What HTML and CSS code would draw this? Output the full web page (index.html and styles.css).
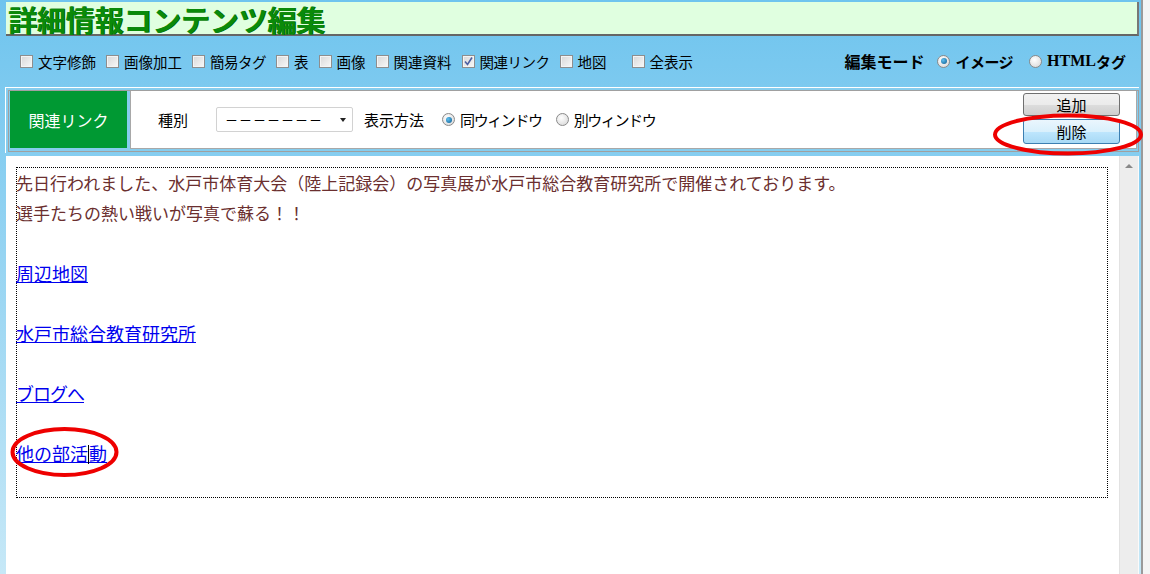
FILE: index.html
```html
<!DOCTYPE html>
<html lang="ja">
<head>
    <meta charset="UTF-8">
    <title>詳細情報コンテンツ編集</title>
    <link rel="stylesheet" href="styles.css">
</head>
<body>
    <div class="frame">
        <h1 class="title">詳細情報コンテンツ編集</h1>

        <div class="toolbar">
            <label class="chk"><span class="box"></span>文字修飾</label>
            <label class="chk"><span class="box"></span>画像加工</label>
            <label class="chk"><span class="box"></span><span class="kana">簡易タグ</span></label>
            <label class="chk"><span class="box"></span>表</label>
            <label class="chk"><span class="box"></span>画像</label>
            <label class="chk"><span class="box"></span>関連資料</label>
            <label class="chk"><span class="box checked"><svg width="11" height="11" viewBox="0 0 11 11"><path d="M2 5.5 L4.5 8.5 L9 1.5" fill="none" stroke="#4b5fa3" stroke-width="1.6"/></svg></span><span class="kana">関連リンク</span></label>
            <label class="chk"><span class="box"></span>地図</label>
            <label class="chk all"><span class="box"></span>全表示</label>

            <div class="mode">
                <span class="mode-label">編集モード</span>
                <label class="rad bold"><span class="dot on"></span><span class="kana">イメージ</span></label>
                <label class="rad bold"><span class="dot"></span><span class="serif">HTML</span>タグ</label>
            </div>
        </div>

        <div class="panel">
            <div class="panel-inner">
                <div class="panel-name">関連リンク</div>
                <div class="panel-body">
                    <span class="field">種別</span>
                    <span class="select">－－－－－－－<span class="arrow"></span></span>
                    <span class="field2">表示方法</span>
                    <label class="rad"><span class="dot on"></span><span class="kana">同ウィンドウ</span></label>
                    <label class="rad"><span class="dot"></span><span class="kana">別ウィンドウ</span></label>
                    <div class="buttons">
                        <button class="btn">追加</button>
                        <button class="btn hot">削除</button>
                    </div>
                </div>
            </div>
        </div>

        <div class="content">
            <div class="editor">
                <div class="doc">
                    <div class="line">先日行われました、水戸市体育大会（陸上記録会）の写真展が水戸市総合教育研究所で開催されております。</div>
                    <div class="line">選手たちの熱い戦いが写真で蘇る！！</div>
                    <div class="line"></div>
                    <div class="line"><a href="#">周辺地図</a></div>
                    <div class="line"></div>
                    <div class="line"><a href="#">水戸市総合教育研究所</a></div>
                    <div class="line"></div>
                    <div class="line"><a href="#" class="kana">ブログへ</a></div>
                    <div class="line"></div>
                    <div class="line"><a href="#">他の部活<span class="caret"></span>動</a></div>
                </div>
            </div>
            <div class="scrollbar"><span class="up"></span></div>
        </div>

        <!-- 赤丸の注記 -->
        <svg class="marks" width="1150" height="574" viewBox="0 0 1150 574">
            <ellipse cx="1068" cy="134.5" rx="73" ry="19" fill="none" stroke="#ee0000" stroke-width="4"/>
            <ellipse cx="64.5" cy="452" rx="52" ry="23" fill="none" stroke="#ee0000" stroke-width="4"/>
        </svg>
    </div>
</body>
</html>
```

FILE: styles.css
```css
body {
    margin: 0;
    background: #f4f4f4;
    font-family: "Noto Sans CJK JP", "Liberation Sans", sans-serif;
    overflow: hidden;
}
.frame {
    position: relative;
    width: 1143px;
    height: 574px;
    box-sizing: border-box;
    padding-top: 2px;
    border-right: 2px solid #9a9a9a;
    background: linear-gradient(to bottom, #6fc4ee, #c6e8f7);
}
.title {
    margin: 0 2px 0 6px;
    padding: 2px 0 0 2px;
    height: 34px;
    box-sizing: border-box;
    background: #e0ffe0;
    border-right: 2px solid #777;
    border-bottom: 2px solid #666;
    font-size: 29px;
    font-weight: 700;
    line-height: 30px;
    color: #0a8a0a;
    text-shadow: 1px 0 0 #006400;
    letter-spacing: -0.2px;
    white-space: nowrap;
}
.kana { letter-spacing: -0.5px; }

/* チェックボックス列 */
.toolbar {
    display: flex;
    align-items: center;
    height: 50px;
    padding-left: 20px;
    padding-right: 15px;
    font-size: 14.5px;
    color: #000;
}
.chk {
    display: flex;
    align-items: center;
    margin-right: 10px;
}
.chk.all { margin-left: 15px; }
.box {
    width: 11px;
    height: 11px;
    border: 1px solid #8e8e8e;
    background: linear-gradient(135deg, #d8d8d8, #f8f8f8);
    box-shadow: inset 0 0 0 1px #f4f4f4;
    margin-right: 5px;
    display: flex;
    align-items: center;
    justify-content: center;
}
.mode {
    margin-left: auto;
    display: flex;
    align-items: center;
}
.mode-label {
    font-weight: 700;
    font-size: 16px;
    margin-right: 13px;
}
.rad {
    display: flex;
    align-items: center;
    margin-right: 16px;
}
.mode .rad:last-child { margin-right: 0; }
.bold { font-weight: 700; font-size: 15px; }
.serif {
    font-family: "Liberation Serif", serif;
    font-size: 16px;
}
.dot {
    width: 11px;
    height: 11px;
    border-radius: 50%;
    border: 1px solid #8a8a8a;
    background: radial-gradient(circle at 40% 35%, #ffffff, #d4d4d4);
    margin-right: 5px;
    display: flex;
    align-items: center;
    justify-content: center;
}
.dot.on::after {
    content: "";
    width: 6px;
    height: 6px;
    border-radius: 50%;
    background: radial-gradient(circle at 35% 35%, #5fc0f0, #0b5a8f);
}

/* 関連リンク パネル */
.panel {
    margin: 1px 2px 0 5px;
    border-top: 1px solid #fff;
    border-left: 1px solid #fff;
    padding: 2px 0 1px 2px;
    background: #86cdee;
}
.panel-inner {
    display: flex;
    gap: 3px;
    border: 1px solid #a0a0a0;
    padding: 0 1px 2px 1px;
}
.panel-name {
    width: 117px;
    height: 57px;
    background: #009933;
    color: #fff;
    font-size: 16px;
    display: flex;
    align-items: center;
    justify-content: center;
}
.panel-body {
    flex: 1;
    height: 57px;
    background: #fff;
    border: 1px solid #a8a8a8;
    border-top: none;
    display: flex;
    align-items: center;
    font-size: 15px;
    padding-left: 27px;
    padding-right: 16px;
}
.panel-body .kana { letter-spacing: -1.4px; }
.field { margin-right: 28px; }
.select {
    position: relative;
    height: 23px;
    border: 1px solid #d2d2d2;
    border-radius: 2px;
    font-size: 13px;
    line-height: 23px;
    padding-left: 8px;
    width: 127px;
    margin-right: 11px;
    letter-spacing: 1px;
    overflow: hidden;
    white-space: nowrap;
}
.arrow {
    position: absolute;
    right: 6px;
    top: 10px;
    border-left: 3px solid transparent;
    border-right: 3px solid transparent;
    border-top: 4px solid #222;
}
.field2 { margin-right: 18px; }
.panel-body .rad { margin-right: 14px; }
.buttons {
    margin-left: auto;
    display: flex;
    flex-direction: column;
    gap: 3px;
    padding-bottom: 2px;
}
.btn {
    width: 97px;
    height: 23px;
    border: 1px solid #707070;
    border-radius: 3px;
    background: linear-gradient(to bottom, #f2f2f2 0%, #ebebeb 50%, #dddddd 51%, #cfcfcf 100%);
    font-family: "Noto Sans CJK JP", sans-serif;
    font-size: 15px;
    padding: 0;
    line-height: 20px;
    color: #000;
}
.btn.hot {
    height: 25px;
    border-color: #3c7fb1;
    background: linear-gradient(to bottom, #eaf6fd 0%, #d9f0fc 50%, #bee6fd 51%, #a7d9f5 100%);
}

/* 本文エリア */
.content {
    display: flex;
    margin: 3px 2px 0 6px;
    height: 420px;
    background: #fff;
}
.editor {
    flex: 1;
    padding: 11px 11px 0 10px;
}
.doc {
    height: 329px;
    border: 1px dotted #000;
    font-size: 17px;
    line-height: 30px;
    color: #6b2f2f;
}
.line { height: 30px; white-space: nowrap; margin-left: -1px; }
.doc a {
    color: #0000ee;
    font-size: 18px;
}
.doc a.kana { letter-spacing: -1px; }
.caret {
    display: inline-block;
    width: 1px;
    height: 19px;
    background: #000;
    vertical-align: -3px;
}
.scrollbar {
    width: 20px;
    background: #ededed;
    border-left: 1px solid #e2e2e2;
    border-right: 1px solid #fafafa;
    display: flex;
    justify-content: center;
    padding-top: 8px;
    box-sizing: border-box;
}
.up {
    width: 0;
    height: 0;
    border-left: 4px solid transparent;
    border-right: 4px solid transparent;
    border-bottom: 4px solid #888;
}
.marks {
    position: absolute;
    left: 0;
    top: 0;
    pointer-events: none;
}
```
